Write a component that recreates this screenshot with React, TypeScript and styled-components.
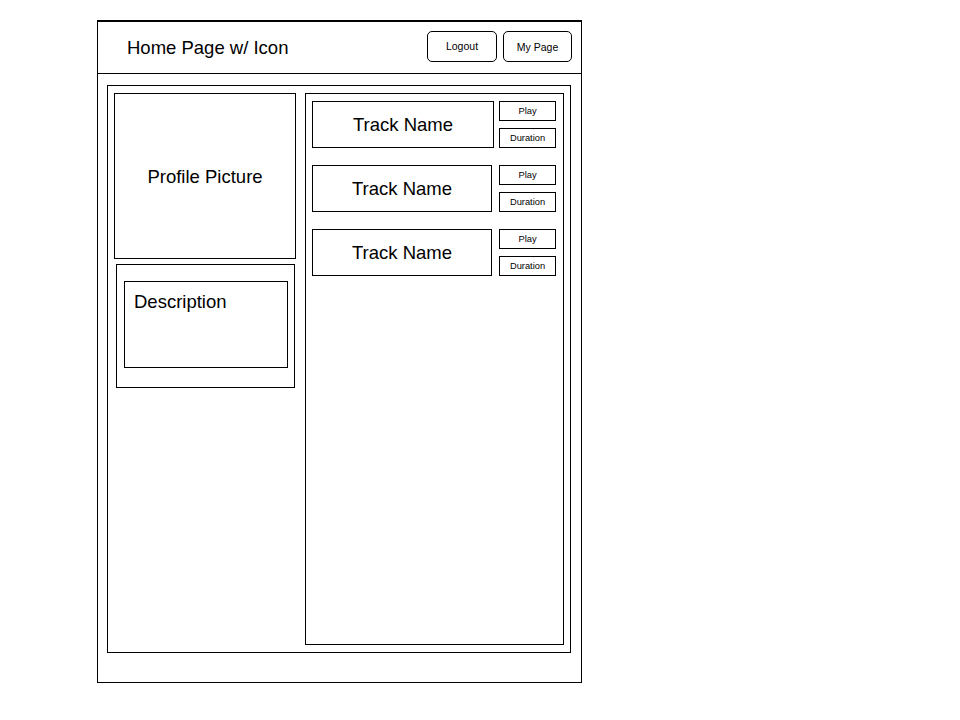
import styled, { createGlobalStyle } from 'styled-components';

const GlobalStyle = createGlobalStyle`
  * { box-sizing: border-box; }
  body {
    margin: 0;
    background: #fff;
    font-family: "Liberation Sans", Arial, sans-serif;
    color: #000;
  }
`;

const Page = styled.div`
  padding: 20px 0 0 97px;
`;

const Frame = styled.div`
  width: 485px;
  height: 663px;
  border: 1px solid #000;
  border-top-width: 2px;
  display: flex;
  flex-direction: column;
`;

const Header = styled.header`
  height: 52px;
  flex-shrink: 0;
  border-bottom: 1px solid #000;
  display: flex;
  align-items: center;
  justify-content: space-between;
  padding: 0 9px 0 29px;
`;

const Title = styled.h1`
  margin: 0;
  font-size: 18.5px;
  font-weight: normal;
`;

const Actions = styled.div`
  display: flex;
  gap: 6px;
  margin-bottom: 3px;
`;

const NavButton = styled.button<{ $w: number; $drop: number }>`
  width: ${({ $w }) => $w}px;
  height: 31px;
  border: 1px solid #000;
  border-radius: 5px;
  background: #fff;
  font-family: inherit;
  font-size: 10.5px;
  color: #000;
  padding: ${({ $drop }) => $drop}px 0 0;
`;

const Content = styled.main`
  margin: 11px 10px 0 9px;
  height: 568px;
  border: 1px solid #000;
  display: flex;
  gap: 9px;
  padding: 7px 6px 7px 6px;
`;

const LeftCol = styled.div`
  width: 182px;
  display: flex;
  flex-direction: column;
  gap: 5px;
`;

const ProfileBox = styled.div`
  height: 166px;
  border: 1px solid #000;
  display: flex;
  align-items: center;
  justify-content: center;
  font-size: 18.5px;
  padding-top: 2px;
`;

const DescOuter = styled.div`
  margin-left: 2px;
  width: 179px;
  height: 124px;
  border: 1px solid #000;
  padding: 16px 7px 0 7px;
`;

const DescInner = styled.div`
  width: 164px;
  height: 87px;
  border: 1px solid #000;
  padding: 9px 0 0 9px;
  font-size: 18.5px;
`;

const TrackPanel = styled.section`
  width: 259px;
  border: 1px solid #000;
  padding: 7px 6px;
  display: flex;
  flex-direction: column;
  gap: 17px;
`;

const TrackRow = styled.div`
  display: flex;
  gap: 5px;
`;

const TrackName = styled.div<{ $w: number }>`
  width: ${({ $w }) => $w}px;
  height: 47px;
  border: 1px solid #000;
  display: flex;
  align-items: center;
  justify-content: center;
  font-size: 18.5px;
`;

const TrackActions = styled.div<{ $offset: number }>`
  margin-left: ${({ $offset }) => $offset}px;
  display: flex;
  flex-direction: column;
  gap: 7px;
`;

const SmallButton = styled.button`
  width: 57px;
  height: 20px;
  border: 1px solid #000;
  border-radius: 0;
  background: #fff;
  font-family: inherit;
  font-size: 9.3px;
  color: #000;
  padding: 0;
`;

const tracks = [
  { name: 'Track Name', width: 182, offset: 0 },
  { name: 'Track Name', width: 180, offset: 2 },
  { name: 'Track Name', width: 180, offset: 2 },
];

const App = () => {
  return (
    <>
      <GlobalStyle />
      <Page>
        <Frame>
          <Header>
            <Title>Home Page w/ Icon</Title>
            <Actions>
              <NavButton $w={70} $drop={0}>Logout</NavButton>
              <NavButton $w={69} $drop={2}>My Page</NavButton>
            </Actions>
          </Header>
          <Content>
            <LeftCol>
              <ProfileBox>Profile Picture</ProfileBox>
              <DescOuter>
                <DescInner>Description</DescInner>
              </DescOuter>
            </LeftCol>
            <TrackPanel>
              {tracks.map((t, i) => (
                <TrackRow key={i}>
                  <TrackName $w={t.width}>{t.name}</TrackName>
                  <TrackActions $offset={t.offset}>
                    <SmallButton>Play</SmallButton>
                    <SmallButton>Duration</SmallButton>
                  </TrackActions>
                </TrackRow>
              ))}
            </TrackPanel>
          </Content>
        </Frame>
      </Page>
    </>
  );
};

export default App;
